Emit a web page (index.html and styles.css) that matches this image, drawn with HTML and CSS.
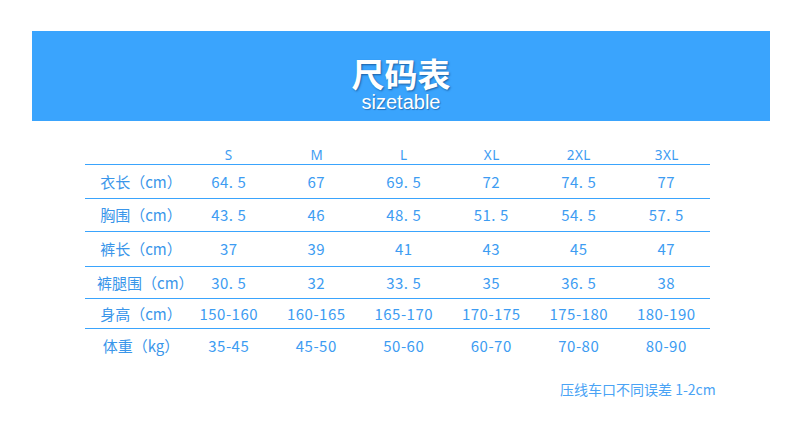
FILE: index.html
```html
<!DOCTYPE html>
<html lang="zh">
<head>
<meta charset="utf-8">
<link rel="stylesheet" href="styles.css">
</head>
<body>
<div class="page">
  <header class="banner">
    <div class="title">尺码表</div>
    <div class="subtitle">sizetable</div>
  </header>
  <div class="table">
    <div class="row head">
      <div class="cell label"></div>
      <div class="cell">S</div><div class="cell">M</div><div class="cell">L</div>
      <div class="cell">XL</div><div class="cell">2XL</div><div class="cell">3XL</div>
    </div>
    <div class="row r1">
      <div class="cell label">衣长（cm）</div>
      <div class="cell">64<span class="dot">.</span>5</div><div class="cell">67</div><div class="cell">69<span class="dot">.</span>5</div>
      <div class="cell">72</div><div class="cell">74<span class="dot">.</span>5</div><div class="cell">77</div>
    </div>
    <div class="row r2">
      <div class="cell label">胸围（cm）</div>
      <div class="cell">43<span class="dot">.</span>5</div><div class="cell">46</div><div class="cell">48<span class="dot">.</span>5</div>
      <div class="cell">51<span class="dot">.</span>5</div><div class="cell">54<span class="dot">.</span>5</div><div class="cell">57<span class="dot">.</span>5</div>
    </div>
    <div class="row r3">
      <div class="cell label">裤长（cm）</div>
      <div class="cell">37</div><div class="cell">39</div><div class="cell">41</div>
      <div class="cell">43</div><div class="cell">45</div><div class="cell">47</div>
    </div>
    <div class="row r4">
      <div class="cell label">裤腿围（cm）</div>
      <div class="cell">30<span class="dot">.</span>5</div><div class="cell">32</div><div class="cell">33<span class="dot">.</span>5</div>
      <div class="cell">35</div><div class="cell">36<span class="dot">.</span>5</div><div class="cell">38</div>
    </div>
    <div class="row r5">
      <div class="cell label">身高（cm）</div>
      <div class="cell">150-160</div><div class="cell">160-165</div><div class="cell">165-170</div>
      <div class="cell">170-175</div><div class="cell">175-180</div><div class="cell">180-190</div>
    </div>
    <div class="row r6">
      <div class="cell label">体重（kg）</div>
      <div class="cell">35-45</div><div class="cell">45-50</div><div class="cell">50-60</div>
      <div class="cell">60-70</div><div class="cell">70-80</div><div class="cell">80-90</div>
    </div>
  </div>
  <div class="note">压线车口不同误差 1-2cm</div>
</div>
</body>
</html>
```
FILE: styles.css
```css
html, body {
  margin: 0;
  padding: 0;
  background: #ffffff;
}
.page {
  width: 800px;
  height: 430px;
  padding-top: 31px;
  box-sizing: border-box;
  font-family: "Noto Sans CJK SC", "Noto Sans", sans-serif;
  color: #3d9cf2;
}
.banner {
  margin: 0 30px 0 32px;
  height: 90px;
  background: #3aa4fd;
  display: flex;
  flex-direction: column;
  align-items: center;
  justify-content: flex-start;
  color: #ffffff;
}
.title {
  margin-top: 24px;
  font-size: 33px;
  font-weight: 700;
  line-height: 36px;
  text-shadow: 1px 1px 2px rgba(0, 40, 90, 0.55);
}
.subtitle {
  font-family: "Liberation Sans", Arial, sans-serif;
  font-size: 20px;
  line-height: 22px;
  margin-top: 0;
  text-shadow: 1px 1px 1px rgba(0, 40, 90, 0.4);
}
.table {
  margin: 20px 0 0 85px;
  width: 625px;
}
.row {
  display: grid;
  grid-template-columns: 100px repeat(6, 1fr);
  height: 33px;
  border-top: 1.5px solid #3aa4fd;
  align-items: center;
  box-sizing: border-box;
}
.row.head {
  border-top: none;
  height: 23px;
  align-items: end;
}
.row.head .cell {
  font-family: "Noto Sans", sans-serif;
  font-size: 15px;
  line-height: 20px;
  transform: scaleX(0.9);
}
.row.r1 { height: 34px; }
.row.r2 { height: 33px; }
.row.r3 { height: 35px; }
.row.r4 { height: 32px; }
.row.r5 { height: 30px; }
.row.r6 { height: 34px; }
.cell {
  text-align: center;
  font-size: 15px;
  line-height: 20px;
  white-space: nowrap;
  letter-spacing: 0.5px;
}
.dot {
  padding-right: 4px;
}
.cell.label {
  padding-left: 12px;
  letter-spacing: 0;
  color: #3a96ea;
}
.note {
  margin: 17px 0 0 560px;
  font-size: 14px;
  color: #4aa3f5;
}
```
